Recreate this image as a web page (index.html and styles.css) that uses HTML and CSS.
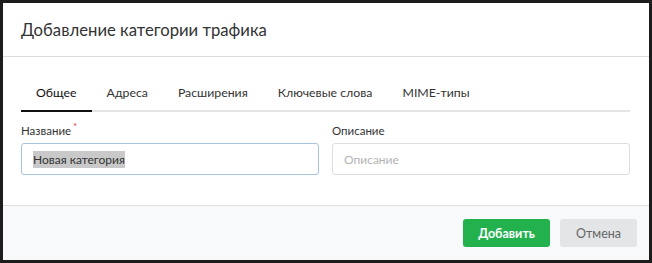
FILE: index.html
```html
<!DOCTYPE html>
<html lang="ru">
<head>
  <meta charset="UTF-8" />
  <title>Добавление категории трафика</title>
  <link rel="stylesheet" href="styles.css">
</head>
<body>
  <div class="dialog">
    <header class="dialog-head">
      <h1>Добавление категории трафика</h1>
    </header>

    <div class="dialog-body">
      <nav class="tabs">
        <span class="tab active">Общее</span>
        <span class="tab">Адреса</span>
        <span class="tab">Расширения</span>
        <span class="tab">Ключевые слова</span>
        <span class="tab">MIME-типы</span>
      </nav>

      <div class="fields">
        <div class="field">
          <label>Название<span class="req">*</span></label>
          <div class="input focused"><span class="selected">Новая категория</span></div>
        </div>
        <div class="field">
          <label>Описание</label>
          <div class="input placeholder">Описание</div>
        </div>
      </div>
    </div>

    <footer class="dialog-foot">
      <button class="btn btn-primary">Добавить</button>
      <button class="btn btn-cancel">Отмена</button>
    </footer>
  </div>
</body>
</html>
```

FILE: styles.css
```css
html, body {
  margin: 0;
  padding: 0;
}
body {
  background: #1c1c1c;
  padding: 3px;
  font-family: Lato, "Open Sans", sans-serif;
  color: #333;
}
.dialog {
  width: 646px;
  height: 257px;
  background: #fff;
  display: flex;
  flex-direction: column;
}
.dialog-head {
  height: 53px;
  padding: 0 18px;
  display: flex;
  align-items: center;
  border-bottom: 1px solid #dcdcdc;
}
.dialog-head h1 {
  margin: 0;
  font-size: 16.7px;
  font-weight: 400;
  color: #333;
}
.dialog-body {
  flex: 1;
  padding: 28px 19px 0 18px;
}
.tabs {
  display: flex;
  border-bottom: 2px solid #e4e4e4;
}
.tab {
  padding: 0 15px 9px;
  font-size: 12.3px;
  line-height: 16px;
  color: #333;
  margin-bottom: -2px;
  border-bottom: 2px solid transparent;
}
.tab.active {
  color: #111;
  border-bottom-color: #111;
}
.fields {
  display: grid;
  grid-template-columns: 1fr 1fr;
  gap: 13px;
  margin-top: 11px;
}
.field label {
  display: block;
  font-size: 11.5px;
  line-height: 15px;
  color: #333;
  margin-bottom: 5px;
}
.req {
  color: #e0364a;
  font-size: 10px;
  vertical-align: top;
  margin-left: 2px;
  position: relative;
  top: -4px;
}
.input {
  height: 30px;
  border: 1px solid #dedede;
  border-radius: 3px;
  padding: 0 11px;
  display: flex;
  align-items: center;
  font-size: 12px;
  color: #333;
}
.input.focused {
  border-color: #a6c4dc;
}
.selected {
  background: #c9c9c9;
  padding: 1px 0;
}
.input.placeholder {
  color: #b3b3b3;
}
.dialog-foot {
  height: 54px;
  border-top: 1px solid #dcdcdc;
  background: #f8f9fb;
  display: flex;
  justify-content: flex-end;
  align-items: center;
  gap: 10px;
  padding: 0 12px;
}
.btn {
  height: 28px;
  border: none;
  border-radius: 3px;
  font-family: Lato, "Open Sans", sans-serif;
  font-size: 12.5px;
  cursor: pointer;
}
.btn-primary {
  width: 87px;
  background: #23b14d;
  color: #fff;
  font-weight: 700;
}
.btn-cancel {
  width: 77px;
  background: #e3e5e7;
  color: #666;
}
```
